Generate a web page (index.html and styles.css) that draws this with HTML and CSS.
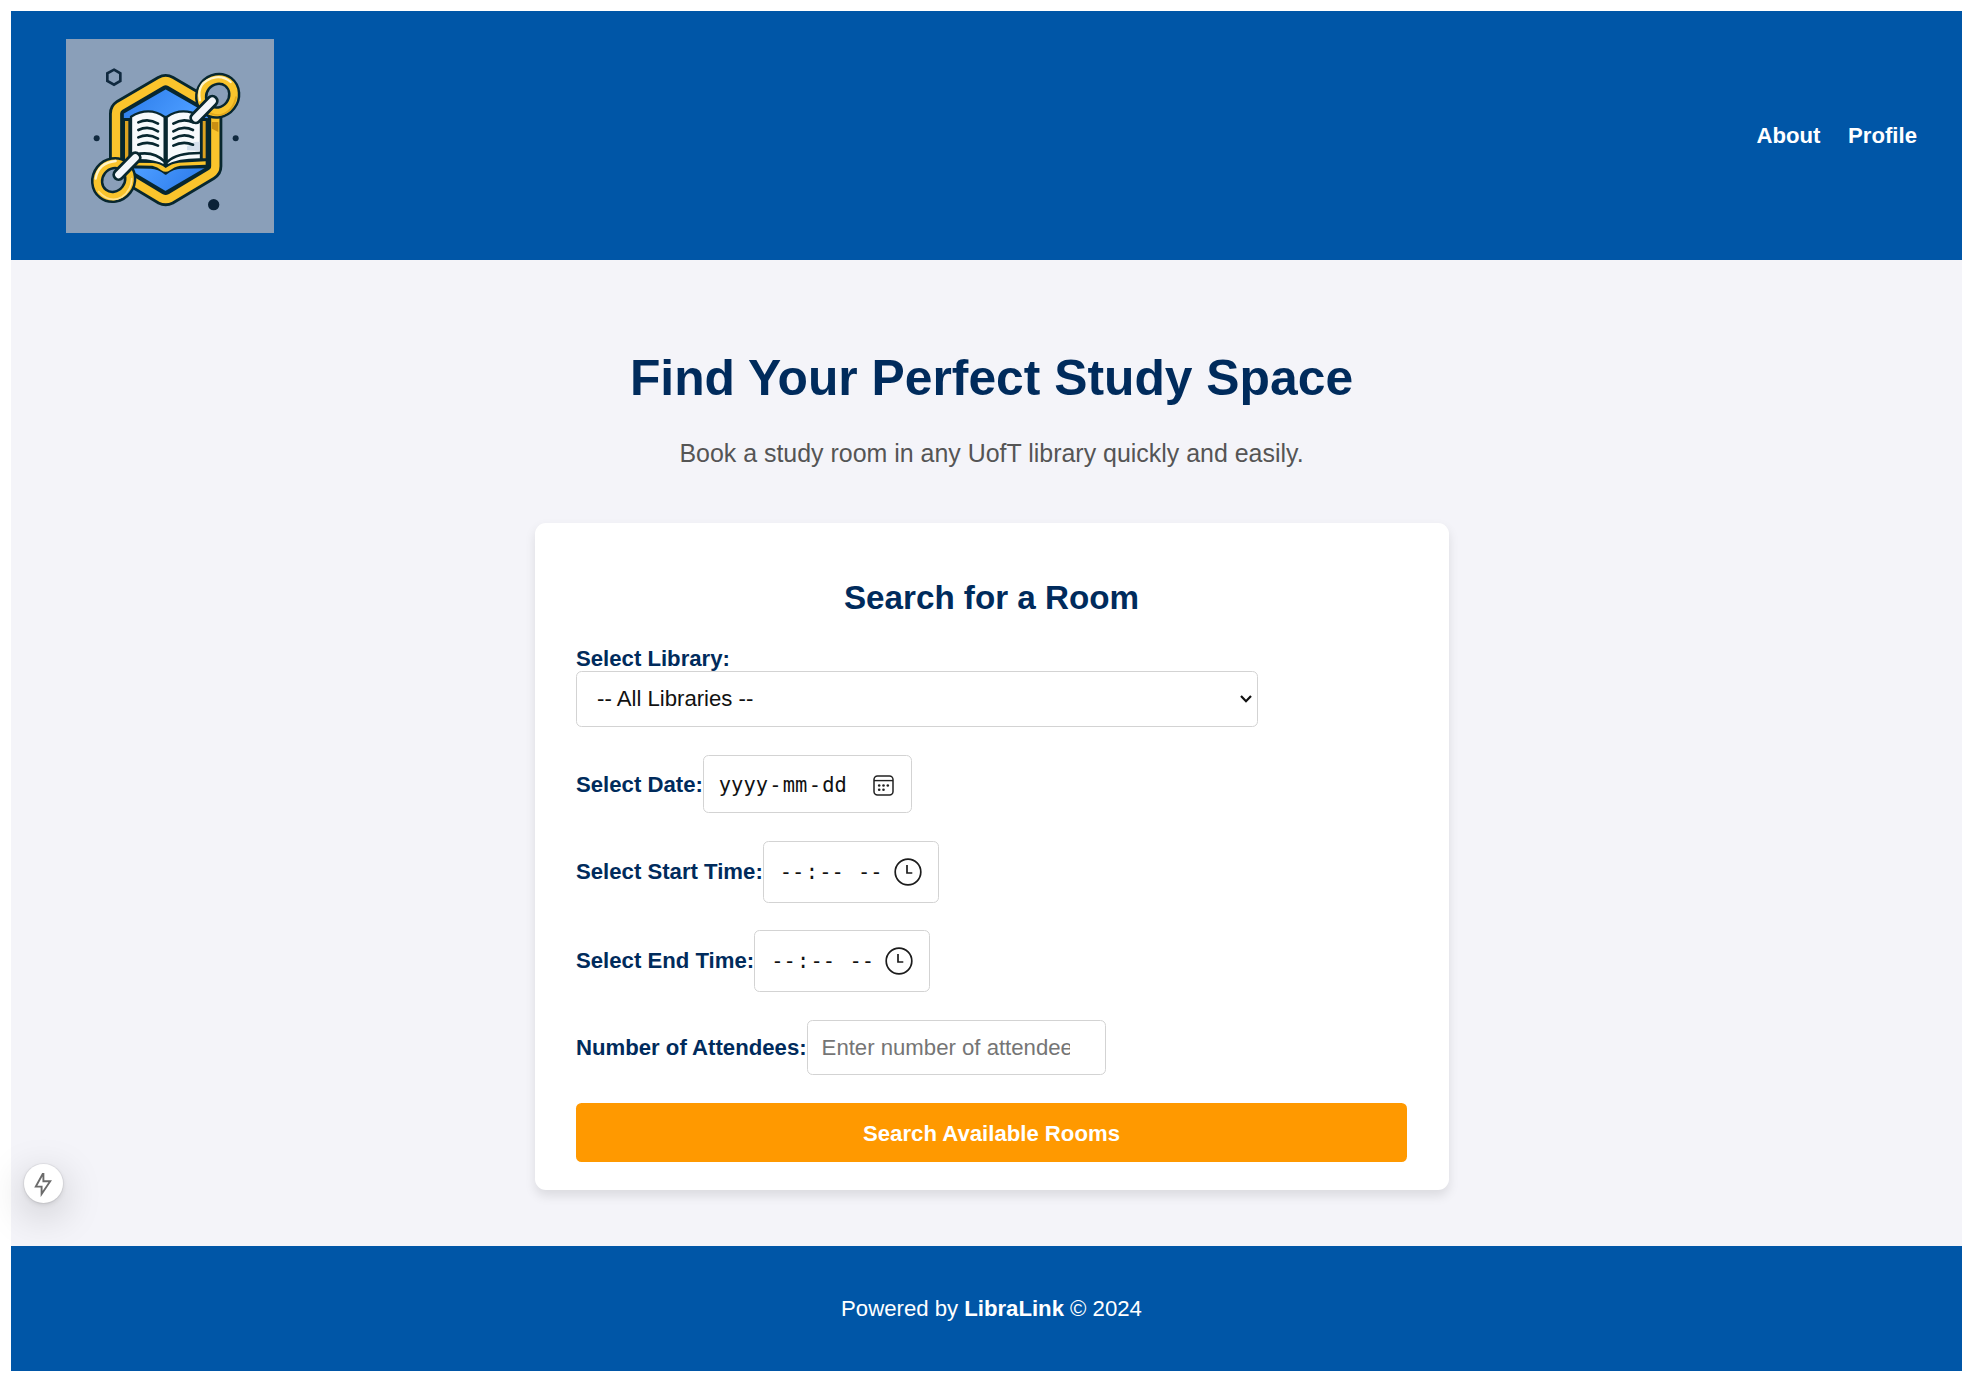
FILE: index.html
```html
<!DOCTYPE html>
<html lang="en">
<head>
<meta charset="utf-8">
<title>LibraLink</title>
<link rel="stylesheet" href="styles.css">
</head>
<body>
<div class="page">
  <header class="header">
    <svg class="logo" viewBox="199 116 624 582" preserveAspectRatio="none" role="img" aria-label="LibraLink">
      <defs>
        <linearGradient id="sky" x1="0" y1="0" x2="1" y2="1"><stop offset="0" stop-color="#2a7ae8"/><stop offset=".5" stop-color="#4a9bff"/><stop offset="1" stop-color="#2674e6"/></linearGradient>
      </defs>
      <rect x="199" y="116" width="624" height="582" fill="#8a9fb9"/>
      <path d="M343 208 362 219V242L343 253 323 242V219Z" fill="none" stroke="#10293f" stroke-width="8"/>
      <circle cx="291" cy="414" r="9" fill="#10293f"/>
      <circle cx="708" cy="414" r="9" fill="#10293f"/>
      <circle cx="642" cy="613" r="17" fill="#0b2238"/>
      <g stroke-linejoin="round" stroke-linecap="round">
        <path d="M484 246Q498 238 512 246L635 318Q647 326 647 340V498Q647 512 635 519L512 593Q498 600 484 593L361 519Q349 512 349 498V340Q349 326 361 318Z" fill="none" stroke="#08272f" stroke-width="42"/>
        <path d="M484 246Q498 238 512 246L635 318Q647 326 647 340V498Q647 512 635 519L512 593Q498 600 484 593L361 519Q349 512 349 498V340Q349 326 361 318Z" fill="none" stroke="#fac42c" stroke-width="25"/>
        <path d="M498 262 629 337V500L498 577 368 500V337Z" fill="url(#sky)" stroke="#08272f" stroke-width="9"/>
        <path d="M637 385 656 395V365H637Z" fill="#c98f13"/>
        <path d="M370 357 622 357V500L543 501Q520 502 498 519Q476 502 454 501L370 500Z" fill="#08272f" stroke="#08272f" stroke-width="8"/>
        <path d="M376 362H386V482H376Z M609 362H618V474H609Z" fill="#dda321"/>
        <path d="M394 349Q448 317 495 350V496Q460 476 394 480Z" fill="#f7fafc" stroke="#08272f" stroke-width="7"/>
        <path d="M501 350Q548 317 604 349V477Q538 476 501 496Z" fill="#f7fafc" stroke="#08272f" stroke-width="7"/>
        <path d="M388 487 460 488Q482 490 498 503Q514 490 538 487L618 483V493L542 496Q522 500 511 510Q498 519 485 510Q474 500 458 496L388 495Z" fill="#fac42c"/>
        <path d="M562 438Q585 420 600 425V452L562 450Z" fill="#d5e0ec"/>
        <path d="M498 350V490M416 366Q446 352 475 370M416 389Q446 375 475 393M416 411Q446 397 475 415M416 433Q446 421 475 436M521 370Q550 352 580 366M521 393Q550 375 580 389M521 415Q550 397 580 411M521 436Q550 421 580 433M420 460Q466 454 495 484M504 484Q530 458 600 458" fill="none" stroke="#08272f" stroke-width="8"/>
        <g fill="none">
          <ellipse cx="654" cy="286" rx="48" ry="52" transform="rotate(38 654 286)" fill="#8a9fb9" stroke="#08272f" stroke-width="37"/>
          <ellipse cx="654" cy="286" rx="48" ry="52" transform="rotate(38 654 286)" stroke="#f9c42c" stroke-width="22"/>
          <path d="M601 300Q589 242 648 231Q674 228 693 245" stroke="#fff3c7" stroke-width="7"/>
          <path d="M618 330Q634 345 662 344Q700 335 709 290" stroke="#e2a81c" stroke-width="5"/>
          <ellipse cx="342" cy="539" rx="48" ry="52" transform="rotate(38 342 539)" fill="#8a9fb9" stroke="#08272f" stroke-width="37"/>
          <ellipse cx="342" cy="539" rx="48" ry="52" transform="rotate(38 342 539)" stroke="#f9c42c" stroke-width="22"/>
          <path d="M288 535Q295 488 348 482" stroke="#fff3c7" stroke-width="7"/>
          <path d="M297 574Q330 610 367 590Q396 568 396 535" stroke="#ffe28c" stroke-width="5"/>
          <path d="M588 353 638 302M357 523 407 472" stroke="#08272f" stroke-width="38"/>
          <path d="M588 353 638 302M357 523 407 472" stroke="#f4f7fa" stroke-width="21"/>
        </g>
      </g>
    </svg>
    <nav class="nav"><a>About</a><a>Profile</a></nav>
  </header>

  <main class="main">
    <h1 class="title">Find Your Perfect Study Space</h1>
    <p class="subtitle">Book a study room in any UofT library quickly and easily.</p>
    <form class="card">
      <h2 class="card-title">Search for a Room</h2>
      <label class="label">Select Library:</label>
      <div class="box select"><span>-- All Libraries --</span>
        <svg width="14" height="10" viewBox="0 0 14 10"><path d="M2 2 7 7.2 12 2" fill="none" stroke="#111" stroke-width="2.2"/></svg>
      </div>
      <div class="row date-row"><label class="label">Select Date:</label>
        <div class="box date"><span class="seg">yyyy</span><span class="seg">-</span><span class="seg">mm</span><span class="seg">-</span><span class="seg">dd</span>
          <svg class="calendar" width="21" height="21" viewBox="0 0 21 21"><rect x="1" y="1" width="19" height="19" rx="3.5" fill="none" stroke="#222" stroke-width="1.5"/><path d="M1 5.6H20" stroke="#222" stroke-width="1.4"/><g fill="#222"><circle cx="6.2" cy="10.5" r="1.3"/><circle cx="10.5" cy="10.5" r="1.3"/><circle cx="14.8" cy="10.5" r="1.3"/><circle cx="6.2" cy="14.7" r="1.3"/><circle cx="10.5" cy="14.7" r="1.3"/></g></svg>
        </div>
      </div>
      <div class="row"><label class="label">Select Start Time:</label>
        <div class="box time"><span class="seg">--</span><span class="seg">:</span><span class="seg">--</span><span class="seg meridiem">--</span>
          <svg class="clock" width="28" height="28" viewBox="0 0 28 28"><circle cx="14" cy="14" r="12.8" fill="none" stroke="#1c1c1c" stroke-width="1.7"/><path d="M13 7V15H18.3" fill="none" stroke="#1c1c1c" stroke-width="1.7"/></svg>
        </div>
      </div>
      <div class="row"><label class="label">Select End Time:</label>
        <div class="box time"><span class="seg">--</span><span class="seg">:</span><span class="seg">--</span><span class="seg meridiem">--</span>
          <svg class="clock" width="28" height="28" viewBox="0 0 28 28"><circle cx="14" cy="14" r="12.8" fill="none" stroke="#1c1c1c" stroke-width="1.7"/><path d="M13 7V15H18.3" fill="none" stroke="#1c1c1c" stroke-width="1.7"/></svg>
        </div>
      </div>
      <div class="row"><label class="label">Number of Attendees:</label>
        <input class="box count" type="text" placeholder="Enter number of attendees">
      </div>
      <button class="submit" type="button">Search Available Rooms</button>
    </form>
  </main>

  <footer class="footer">Powered by&nbsp;<strong>LibraLink</strong>&nbsp;© 2024</footer>
</div>
<div class="badge">
  <svg width="18" height="26" viewBox="0 0 18 26"><path d="M8.7 3 1.8 15.6H7.6V23L16.2 10.2H9.4V3Z" fill="none" stroke="#6b6b6b" stroke-width="1.9"/></svg>
</div>
</body>
</html>
```
FILE: styles.css
```css
* { box-sizing: border-box; }
html { overflow: hidden; }
body {
  margin: 0;
  background: #fff;
  font-family: "Liberation Sans", Arial, sans-serif;
  font-size: 22.17px;
  overflow: hidden;
}
.page { width: 1961px; margin: 11px 0 0 11px; }
.header {
  height: 249px;
  padding: 0 55px;
  background: #0056a7;
  display: flex;
  align-items: center;
  justify-content: space-between;
}
.logo { width: 208px; height: 194px; }
.nav { display: flex; gap: 27.7px; color: #fff; font-weight: bold; }
.main {
  height: 985.5px;
  padding-top: 88px;
  background: #f4f4f9;
  display: flex;
  flex-direction: column;
  align-items: center;
}
.title { margin: 0; font-size: 49.8px; line-height: 60px; color: #002b5c; }
.subtitle { margin: 30px 0 55px; font-size: 24.95px; line-height: 30px; color: #555; }
.card {
  width: 914px;
  height: 667px;
  padding: 55px 41.5px 0;
  background: #fff;
  border-radius: 11px;
  box-shadow: 0 5.5px 11px rgba(0, 0, 0, .1);
}
.card-title { margin: 0 0 28px; font-size: 33.2px; line-height: 40px; text-align: center; color: #002b5c; }
.label { display: block; line-height: 26px; font-weight: bold; color: #002b5c; white-space: nowrap; }
.box {
  display: flex;
  align-items: center;
  border: 1.4px solid #d3d3d3;
  border-radius: 5.5px;
  background: #fff;
  color: #111;
}
.select { width: 682px; height: 56px; padding: 0 4px 0 20px; margin-top: -0.6px; justify-content: space-between; }
.row { display: flex; align-items: center; margin-top: 27.7px; }
.date-row .label { padding-top: 1px; }
.seg { font-family: "DejaVu Sans Mono", monospace; font-size: 20.4px; margin-right: 1.3px; }
.date { width: 209px; height: 58px; padding: 2px 0 0 15px; }
.calendar { margin-left: 25px; }
.time { width: 176px; height: 62px; padding-left: 16px; }
.meridiem { margin-left: 13px; }
.clock { margin-left: 10px; }
.count {
  width: 299px;
  height: 55px;
  padding: 0 35px 0 14px;
  font: 22.17px "Liberation Sans", Arial, sans-serif;
}
.count::placeholder { color: #757575; }
.submit {
  display: block;
  width: 100%;
  height: 59px;
  margin-top: 28px;
  padding: 2px 0 0;
  border: 0;
  border-radius: 5.5px;
  background: #ff9900;
  color: #fff;
  font: bold 22.17px "Liberation Sans", Arial, sans-serif;
}
.footer {
  height: 125.5px;
  padding-top: 1px;
  background: #0056a7;
  color: #fff;
  display: flex;
  align-items: center;
  justify-content: center;
}
.badge {
  position: absolute;
  left: 23.5px;
  top: 1164px;
  width: 39px;
  height: 39px;
  border-radius: 50%;
  background: #fff;
  display: flex;
  align-items: center;
  justify-content: center;
  box-shadow: 0 0 0 1px rgba(0, 0, 0, .05), 0 11px 40px rgba(0, 0, 0, .22), 0 2px 5px rgba(0, 0, 0, .1);
}
```
